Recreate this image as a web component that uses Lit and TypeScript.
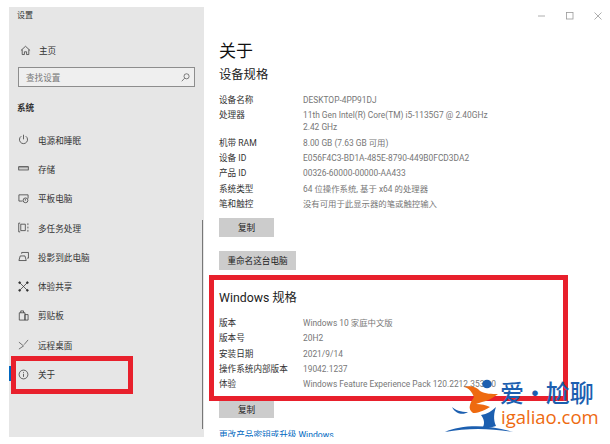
import { LitElement, html, css, svg } from "lit";
import { customElement } from "lit/decorators.js";

const ic = (body: unknown) => html`<svg class="ic" viewBox="0 0 12 12" fill="none" stroke="#333" stroke-width=".8">${body}</svg>`;
const nav: [string, unknown][] = [
  ["电源和睡眠", svg`<path d="M3.6 2.4a4.4 4.4 0 1 0 4.8 0M6 .8v5"/>`],
  ["存储", svg`<rect x=".8" y="4" width="10.4" height="3.6"/><path d="M.8 5.2h10.4" stroke-width=".5"/>`],
  ["平板电脑", svg`<path d="M5 8.8H1V2h10v4"/><circle cx="8.2" cy="8" r="2.6"/><path d="M8 6.4v2"/>`],
  ["多任务处理", svg`<path d="M3 2.4h5v7H3zM.8 1.2v9.6M.8 1.2h1.6M.8 10.8h1.6M10.8 1.4v2M10.8 5v2M10.8 8.6v2"/>`],
  ["投影到此电脑", svg`<path d="M4 3V1.6h7.4v6.2H10M1 10.4l1.4-5h5.2l1.4 5z"/>`],
  ["体验共享", svg`<path d="M2.4 2.4l7.2 7.2M9.6 2.4l-7.2 7.2"/><circle cx="1.8" cy="1.8" r="1" fill="#333"/><circle cx="10.2" cy="1.8" r="1" fill="#333"/><circle cx="1.8" cy="10.2" r="1" fill="#333"/><circle cx="10.2" cy="10.2" r="1" fill="#333"/>`],
  ["剪贴板", svg`<path d="M1.4 3h6.2v8H1.4zM7.6 5H11v6H7.6zM3 3V1h3v2"/>`],
  ["远程桌面", svg`<path d="M1 3.4L6 7.6 1 11M11 1L6.6 6.2" stroke-width=".7"/>`],
  ["关于", svg`<circle cx="6" cy="6" r="4.8"/><path d="M6 5.2v3.4M6 3.2v1"/>`],
];
const spec1: [string, string][] = [
  ["设备名称", "DESKTOP-4PP91DJ"],
  ["处理器", "11th Gen Intel(R) Core(TM) i5-1135G7 @ 2.40GHz\n2.42 GHz"],
  ["机带 RAM", "8.00 GB (7.63 GB 可用)"],
  ["设备 ID", "E056F4C3-BD1A-485E-8790-449B0FCD3DA2"],
  ["产品 ID", "00326-60000-00000-AA433"],
  ["系统类型", "64 位操作系统, 基于 x64 的处理器"],
  ["笔和触控", "没有可用于此显示器的笔或触控输入"],
];
const spec2: [string, string][] = [
  ["版本", "Windows 10 家庭中文版"],
  ["版本号", "20H2"],
  ["安装日期", "2021/9/14"],
  ["操作系统内部版本", "19042.1237"],
  ["体验", "Windows Feature Experience Pack 120.2212.3530.0"],
];

@customElement("app-root")
export class AppRoot extends LitElement {
  static styles = css`
    :host { display: block; width: 610px; height: 444px; background: #fff; position: relative; overflow: hidden;
      font-family: Roboto, "Noto Sans CJK SC", sans-serif; font-size: 8.6px; color: #333; }
    .win { display: flex; height: 430px; margin: 7px 0 0 9px; overflow: hidden; }
    .side { width: 195px; flex: none; background: #e6e6e6; position: relative; box-sizing: border-box; }
    .side-title { padding: 3px 0 0 8px; line-height: 12px; height: 27px; box-sizing: border-box; font-size: 8px; }
    .home { display: flex; align-items: center; height: 16px; margin-top: 8px; padding-left: 11px; }
    .ic { width: 11px; height: 11px; flex: none; margin-right: 9px; }
    .home .ic { margin-right: 8px; }
    .search { margin: 9px 0 0 9px; width: 177px; height: 20px; box-sizing: border-box; border: 1.5px solid #8d8d8d; background: #efefef;
      display: flex; align-items: center; justify-content: space-between; padding: 0 4px 0 7px; color: #777; }
    .search .ic { margin: 0; width: 9px; height: 9px; }
    .group { font-weight: 700; margin: 15px 0 0 8px; line-height: 12px; height: 18px; font-size: 8.6px; }
    .list { display: flex; flex-direction: column; margin-top: 5px; }
    .item { height: 29.3px; display: flex; align-items: center; padding-left: 9px; position: relative; flex: none; }
    .item.on::before { content: ""; position: absolute; left: 0; top: 7px; width: 2px; height: 15px; background: #0067c0; }
    .thumb { position: absolute; right: 1px; top: 213px; bottom: 8px; width: 1px; background: #777; }
    .main { flex: 1; padding: 0 0 0 15px; position: relative; min-width: 0; }
    .ctrl { display: flex; justify-content: flex-end; gap: 18px; padding: 4px 7px 0 0; height: 23px; box-sizing: border-box; }
    .ctrl svg { width: 10px; height: 10px; }
    h1 { margin: 9px 0 0; font-weight: 400; font-size: 17px; line-height: 24px; color: #111; }
    h2 { margin: 0; font-weight: 400; font-size: 12.3px; line-height: 24px; color: #222; }
    .rows { margin-top: 5.5px; display: flex; flex-direction: column; }
    .row { display: grid; grid-template-columns: 84px 1fr; line-height: 12px; padding: 1.65px 0; }
    .val { color: #777; white-space: pre-line; font-size: 8.4px; }
    .btn { display: flex; align-items: center; justify-content: center; height: 19px; width: 55px; background: #ccc; color: #222; margin-top: 6.5px; }
    .btn.wide { width: 77px; margin-top: 14px; }
    h2.w { margin-top: 16.5px; }
    .rows.b { margin-top: 5px; }
    .btn.c { margin-top: 9px; height: 17px; }
    .link { color: #0067c0; margin-top: 11px; line-height: 12px; }
    .mark { position: absolute; border: 5px solid #e8202c; box-sizing: border-box; pointer-events: none; }
    .m1 { left: 11px; top: 356px; width: 122px; height: 38px; }
    .m2 { left: 209px; top: 275px; width: 359px; height: 126px; }
    .logo { position: absolute; left: 445px; top: 378px; width: 165px; height: 62px; }
    .logo svg { position: absolute; left: 0; top: 0; width: 70px; height: 58px; }
    .cn { position: absolute; left: 55px; top: -1px; font-size: 24px; font-weight: 500; word-spacing: -6.5px; line-height: 30px; color: #1c5fb0; white-space: nowrap; font-family: "Noto Sans CJK SC", sans-serif; }
    .en { position: absolute; left: 56px; top: 27px; font-size: 18.5px; line-height: 24px; color: #ee6a10; font-family: "Open Sans", sans-serif; white-space: nowrap; }
  `;

  private rows(list: [string, string][]) {
    return list.map(([k, v]) => html`<div class="row"><span>${k}</span><span class="val">${v}</span></div>`);
  }

  render() {
    return html`
      <div class="win">
        <aside class="side">
          <div class="side-title">设置</div>
          <div class="home">${ic(svg`<path d="M1 6L6 1.4 11 6M2.4 5v5.4h2.4V7.4h2.4v3h2.4V5"/>`)}<span>主页</span></div>
          <div class="search"><span>查找设置</span>${ic(svg`<circle cx="7.4" cy="4.4" r="3.4"/><path d="M4.8 7L1 11"/>`)}</div>
          <div class="group">系统</div>
          <div class="list">
            ${nav.map(([t, i], n) => html`<div class="item ${n === nav.length - 1 ? "on" : ""}">${ic(i)}<span>${t}</span></div>`)}
          </div>
          <div class="thumb"></div>
        </aside>
        <main class="main">
          <div class="ctrl">
            <svg viewBox="0 0 10 10" fill="none" stroke="#999" stroke-width=".8"><path d="M1 5h7"/></svg>
            <svg viewBox="0 0 10 10" fill="none" stroke="#999" stroke-width=".8"><rect x="1.5" y="1.5" width="6.5" height="6.5"/></svg>
            <svg viewBox="0 0 10 10" fill="none" stroke="#999" stroke-width=".8"><path d="M1.5 1.5l7 7M8.5 1.5l-7 7"/></svg>
          </div>
          <h1>关于</h1>
          <h2>设备规格</h2>
          <div class="rows">${this.rows(spec1)}</div>
          <div class="btn">复制</div>
          <div class="btn wide">重命名这台电脑</div>
          <h2 class="w">Windows 规格</h2>
          <div class="rows b">${this.rows(spec2)}</div>
          <div class="btn c">复制</div>
          <div class="link">更改产品密钥或升级 Windows</div>
        </main>
      </div>
      <div class="mark m1"></div>
      <div class="mark m2"></div>
      <div class="logo">
        <svg viewBox="0 0 70 58">
          <ellipse cx="42" cy="6" rx="4.8" ry="4.3" fill="#1c5fb0"/>
          <path d="M19 9 C25 7 32 9 35 13 C40 16 47 16 53 16 C48 20 42 23 37 24 L31 26 C36 26 41 27 45 29 C38 33 33 35 28 35 C25 33 24 30 25 27 C26 23 28 21 29 19 C27 14 24 10 19 9Z" fill="#ee6a10"/>
          <path d="M7 29 C10 32 16 34 23 34 C19 37 11 37 7 29Z" fill="#1c5fb0"/>
          <path d="M36 37 C42 36 47 33 51 29 C49 35 48 41 51 48 C46 50 42 49 38 49 C40 45 39 41 36 37Z" fill="#1c5fb0"/>
          <path d="M0 54 C16 47 42 46 68 54 C44 50 22 50 0 54Z" fill="#1c5fb0"/>
        </svg>
        <span class="cn">爱 · 尬聊</span>
        <span class="en">igaliao.com</span>
      </div>
    `;
  }
}
